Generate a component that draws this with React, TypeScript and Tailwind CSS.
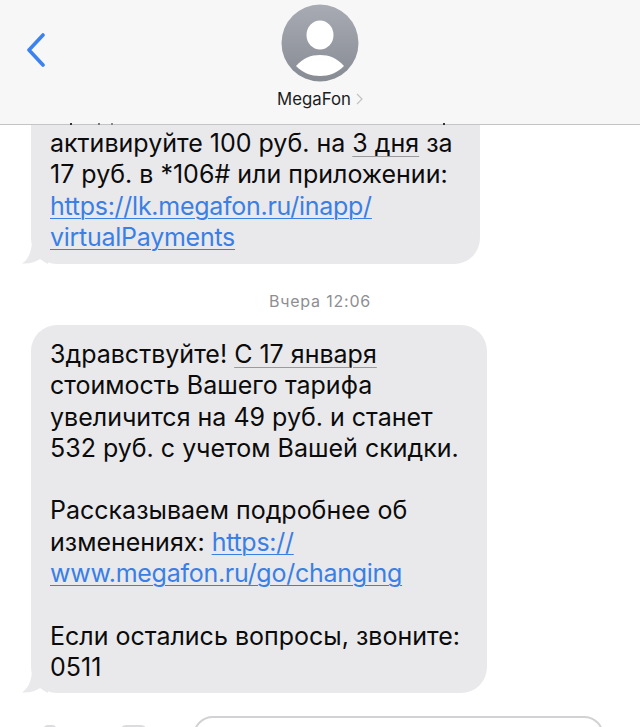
import React from "react";

function Avatar() {
  return (
    <svg width="78" height="78" viewBox="0 0 78 78">
      <defs>
        <linearGradient id="avatarFill" x1="0" y1="0" x2="0" y2="1">
          <stop offset="0" stopColor="#a8abb3" />
          <stop offset="1" stopColor="#878b94" />
        </linearGradient>
      </defs>
      <circle cx="39" cy="39" r="38.5" fill="url(#avatarFill)" />
      <ellipse cx="39" cy="31" rx="13.5" ry="14.5" fill="#fff" />
      <path d="M15 62 C22 54 30 51 39 51 C48 51 56 54 63 62 C56 69 48 72 39 72 C30 72 22 69 15 62 Z" fill="#fff" />
    </svg>
  );
}

function Bubble({ children, className }: { children: React.ReactNode; className: string }) {
  return (
    <div className={`relative ml-[31px] rounded-b-[26px] bg-[#e9e9eb] pl-[19px] text-[25px] leading-[31.3px] text-[#0b0b0b] ${className}`}>
      {children}
      <svg className="absolute -left-[9px] bottom-0" width="26" height="24" viewBox="0 0 26 24">
        <path d="M10 0 C10 10 7 19 0 23.5 C8 24 14 22 18 19 C21 21 24 23 26 24 L26 0 Z" fill="#e9e9eb" />
      </svg>
    </div>
  );
}

export default function App() {
  const link = "tracking-[-0.27px] text-[#3a7fe6] underline decoration-1 underline-offset-[3px]";
  const detected = "underline decoration-[#9a9a9a] decoration-1 underline-offset-[4px]";

  return (
    <div className="flex h-[727px] w-[640px] flex-col overflow-hidden bg-white [font-family:Inter,'Noto_Sans',sans-serif]">
      <header className="relative z-10 flex h-[125px] shrink-0 flex-col items-center border-b border-[#c4c4c6] bg-[#f7f7f7] pt-[4px]">
        <svg className="absolute left-[26px] top-[33px]" width="20" height="34" viewBox="0 0 20 34">
          <path d="M17 2 L3 17 L17 32" fill="none" stroke="#3b82f0" strokeWidth="3.6" strokeLinecap="round" strokeLinejoin="round" />
        </svg>
        <Avatar />
        <div className="mt-[8px] flex items-center gap-[5px] text-[16.8px] leading-[18px] text-[#1c1c1e]">
          MegaFon
          <svg width="7" height="12" viewBox="0 0 7 12">
            <path d="M1 1 L6 6 L1 11" fill="none" stroke="#c2c2c6" strokeWidth="1.2" />
          </svg>
        </div>
        {/* bits of the scrolled-away line showing through the bar edge */}
        <span className="absolute left-[70px] top-[123px] h-[2px] w-[2px] bg-[#333336]" />
        <span className="absolute left-[98px] top-[123px] h-[2px] w-[2px] bg-[#77777a]" />
        <span className="absolute left-[111px] top-[123px] h-[2px] w-[2px] bg-[#88888b]" />
        <span className="absolute left-[443px] top-[123px] h-[2px] w-[2px] bg-[#333336]" />
      </header>

      <main className="flex flex-1 flex-col">
        <Bubble className="h-[139px] w-[449px] pt-[3px]">
          <p>
            активируйте 100 руб. на <span className={detected}>3 дня</span> за
          </p>
          <p>17 руб. в *106# или приложении:</p>
          <p className={link}>https://lk.megafon.ru/inapp/</p>
          <p className={link}>virtualPayments</p>
        </Bubble>

        <p className="mt-[28px] text-center text-[16px] leading-[18px] tracking-[0.8px] text-[#8e8e93]">Вчера 12:06</p>

        <Bubble className="mt-[15px] h-[368px] w-[456px] rounded-t-[26px] pt-[14px]">
          <p>
            Здравствуйте! <span className={detected}>С 17 января</span>
          </p>
          <p>стоимость Вашего тарифа</p>
          <p>увеличится на 49 руб. и станет</p>
          <p>532 руб. с учетом Вашей скидки.</p>
          <p className="mt-[31.3px]">Рассказываем подробнее об</p>
          <p>
            изменениях: <span className={link}>https://</span>
          </p>
          <p className={link}>www.megafon.ru/go/changing</p>
          <p className="mt-[31.3px]">Если остались вопросы, звоните:</p>
          <p>0511</p>
        </Bubble>

        <div className="mt-[23px] flex items-start">
          <div className="ml-[43px] mt-[9px] h-[20px] w-[14px] rounded-t-[5px] bg-[#dcdcdf]" />
          <div className="ml-[63px] mt-[9px] h-[20px] w-[27px] rounded-t-[6px] bg-[#dcdcdf]" />
          <div className="ml-[46px] mr-[36px] h-[40px] flex-1 rounded-t-[20px] border-2 border-[#d2d2d4]" />
        </div>
      </main>
    </div>
  );
}
